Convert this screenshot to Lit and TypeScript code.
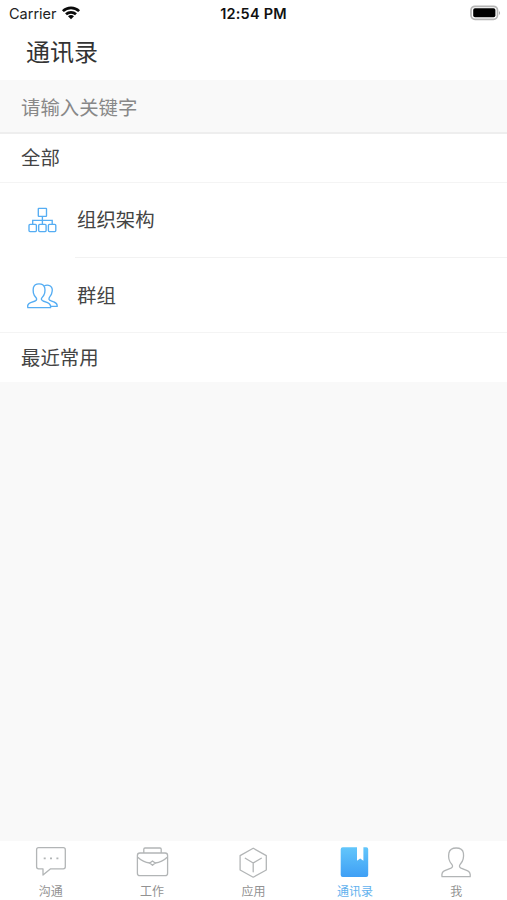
import { LitElement, html, css, svg } from "lit";
import { customElement } from "lit/decorators.js";

const icons = {
  wifi: svg`<svg width="20" height="16" viewBox="61 5 20 16" fill="none" stroke="#0a0a0a" stroke-width="2.7">
    <path d="M62.9 11.1A11.7 11.7 0 0 1 79.1 11.1M66 14.3A7.3 7.3 0 0 1 76 14.3"/>
    <path fill="#0a0a0a" stroke="none" d="M68 16.3A4.4 4.4 0 0 1 74 16.3L71 19.3Z"/></svg>`,
  battery: svg`<svg width="32" height="16" viewBox="470 5.3 32 16">
    <rect x="471" y="6.6" width="26.5" height="13" rx="4" fill="#fff" stroke="#b5b5b5" stroke-width="1.7"/>
    <rect x="473.2" y="8.6" width="22.2" height="9" rx="1.8" fill="#000"/>
    <path d="M499 11.3Q501.2 13.3 499 15.3Z" fill="#aaa"/></svg>`,
  org: svg`<svg width="32" height="28" viewBox="26 207 32 28" fill="none" stroke="#55adf3" stroke-width="1.35">
    <rect x="38.3" y="208.3" width="8.2" height="8" rx=".5"/>
    <path d="M42.4 216.3V224.3M32.7 224.3V220.3H52.2V224.3"/>
    <rect x="29" y="224.4" width="7.4" height="7.2" rx="1"/><rect x="38.7" y="224.4" width="7.4" height="7.2" rx="1"/><rect x="48.4" y="224.4" width="7.4" height="7.2" rx="1"/></svg>`,
  group: svg`<svg width="33" height="28" viewBox="26 282 33 28" fill="none" stroke="#55adf3" stroke-width="1.35" stroke-linejoin="round">
    <path d="M27.8 307.6Q27 304 30.6 302.6L35.2 301Q37.8 299.6 35.7 297.3C32.8 294.2 32.9 290.2 33.4 287.7C34.1 284.9 36.2 283.8 39 283.8C42 283.8 44 285 44.7 287.7C45.4 290.7 45.2 294.2 42.2 297.4Q40.2 299.7 43 301L47.5 302.6Q51 304.1 50.6 307.6Z"/>
    <path d="M44.3 285.8C46.3 284.8 48.6 285 50.3 286C52.8 287.8 52.3 291.9 51.5 294.1C50.8 296.1 48.6 297 49 299.2C49.4 300.6 51.7 300.8 54 302C56.5 303 57.4 303.8 57.2 306.4H51"/></svg>`,
  chat: svg`<svg width="34" height="34" viewBox="34 845 34 34" fill="none" stroke="#b2b5b6" stroke-width="1.3" stroke-linejoin="round">
    <path d="M38.6 847.7H63.3Q65.3 847.7 65.3 849.7V866.8Q65.3 868.8 63.3 868.8H50.6L43 875V868.8H38.6Q36.6 868.8 36.6 866.8V849.7Q36.6 847.7 38.6 847.7Z"/>
    <path stroke-width="1.9" d="M43.7 858.4h2M50 858.4h2M56.4 858.4h2"/></svg>`,
  work: svg`<svg width="34" height="34" viewBox="135 845 34 34" fill="none" stroke="#b2b5b6" stroke-width="1.3" stroke-linejoin="round">
    <rect x="137.4" y="853" width="30.2" height="22.7" rx="2.5"/>
    <path d="M143.8 853V849.3Q143.8 848 145 848H160Q161.2 848 161.2 849.3V853M137.8 857.2Q143 862.2 149.7 863H155.3Q162 862.2 167.2 857.2"/>
    <path fill="#fff" d="M149.8 863L152.5 861L155.2 863L152.5 865.3Z"/></svg>`,
  app: svg`<svg width="34" height="34" viewBox="236.3 845 34 34" fill="none" stroke="#b2b5b6" stroke-width="1.3" stroke-linejoin="round" stroke-linecap="round">
    <path d="M253.5 848.2L266.6 855.6V870L253.5 877.2L240.4 870V855.6ZM245.6 858.3L253.5 863L261.6 858.3M253.5 863V871.8"/></svg>`,
  book: svg`<svg width="34" height="34" viewBox="338 845 34 34">
    <defs><linearGradient id="cover" x1="0" y1="0" x2="0" y2="1"><stop stop-color="#62c6fb"/><stop offset="1" stop-color="#3f9ff5"/></linearGradient></defs>
    <path fill="url(#cover)" d="M342.7 847.3H357V860.7L360.2 858.4L363.4 860.7V847.3H366.2Q368.2 847.3 368.2 849.3V875Q368.2 877 366.2 877H342.7Q340.7 877 340.7 875V849.3Q340.7 847.3 342.7 847.3Z"/></svg>`,
  me: svg`<svg width="34" height="34" viewBox="439 845 34 34" fill="none" stroke="#b2b5b6" stroke-width="1.3" stroke-linejoin="round">
    <path d="M442 876.7Q441.2 872.3 444.8 870.7L451 868.1Q453.7 866.6 451.7 864.2C448.8 861 448.2 856.5 448.9 853C449.7 849.5 452.3 848 456.2 848C460.2 848 462.8 849.7 463.4 853C464 857 463.2 861.1 460.3 864.2Q458.3 866.6 461 868.1L467.2 870.7Q470.8 872.3 470.2 876.7Z"/></svg>`,
};

const tabs = [
  { icon: icons.chat, label: "沟通", active: false },
  { icon: icons.work, label: "工作", active: false },
  { icon: icons.app, label: "应用", active: false },
  { icon: icons.book, label: "通讯录", active: true },
  { icon: icons.me, label: "我", active: false },
];

@customElement("app-root")
export class AppRoot extends LitElement {
  static styles = css`
    :host { display: flex; flex-direction: column; height: 900px; background: #f9f9f9; color: #444;
      font: 19.4px/28px "Noto Sans CJK SC", sans-serif; }
    * { box-sizing: border-box; }
    svg { display: block; flex: none; }
    .status { display: grid; grid-template-columns: 1fr auto 1fr; align-items: start; height: 26px;
      padding: 0 5px 0 9px; background: #fff; font: 14.5px/26px Inter, sans-serif; color: #222; }
    .carrier { display: flex; align-items: center; gap: 4px; padding-top: 1px; }
    .carrier svg { margin-top: -2px; }
    .time { padding: 1px 4px 0 0; font-weight: 600; letter-spacing: .2px; color: #111; }
    .battery { justify-self: end; padding-top: 5px; }
    .title { height: 54px; padding: 7px 26px 0; background: #fff; font-size: 24px; line-height: 36px; color: #333; }
    .search { height: 54px; padding: 13px 21px 0; border-bottom: 2px solid #eee; color: #888; }
    .head { height: 49px; padding: 9px 21px 0; background: #fff; border-bottom: 1px solid #f4f4f4; }
    .recent { padding-top: 10px; border-bottom: 0; }
    .row { display: flex; align-items: stretch; height: 75px; background: #fff; }
    .pic { display: flex; align-items: center; width: 75px; padding-left: 26px; }
    .name { flex: 1; padding: 22px 0 0 2px; border-bottom: 1px solid #f2f2f2; }
    .row.last { border-bottom: 1px solid #f4f4f4; }
    .last .name { padding-top: 23px; border-bottom: 0; }
    .last .pic { padding-top: 1px; }
    .space { flex: 1; }
    .tabs { display: grid; grid-template-columns: repeat(5, 1fr); height: 59px; background: #fff; }
    .tab { display: flex; flex-direction: column; align-items: center; padding-top: 4px;
      font-size: 12px; line-height: 18px; color: #929292; }
    .tab.active { color: #62b1ee; }
    .label { margin-top: 3px; }
  `;

  render() {
    return html`
      <div class="status">
        <div class="carrier">Carrier ${icons.wifi}</div>
        <div class="time">12:54 PM</div>
        <div class="battery">${icons.battery}</div>
      </div>
      <div class="title">通讯录</div>
      <div class="search">请输入关键字</div>
      <div class="head">全部</div>
      <div class="row"><div class="pic">${icons.org}</div><div class="name">组织架构</div></div>
      <div class="row last"><div class="pic">${icons.group}</div><div class="name">群组</div></div>
      <div class="head recent">最近常用</div>
      <div class="space"></div>
      <div class="tabs">
        ${tabs.map((t) => html`<div class="tab ${t.active ? "active" : ""}">${t.icon}<div class="label">${t.label}</div></div>`)}
      </div>
    `;
  }
}
